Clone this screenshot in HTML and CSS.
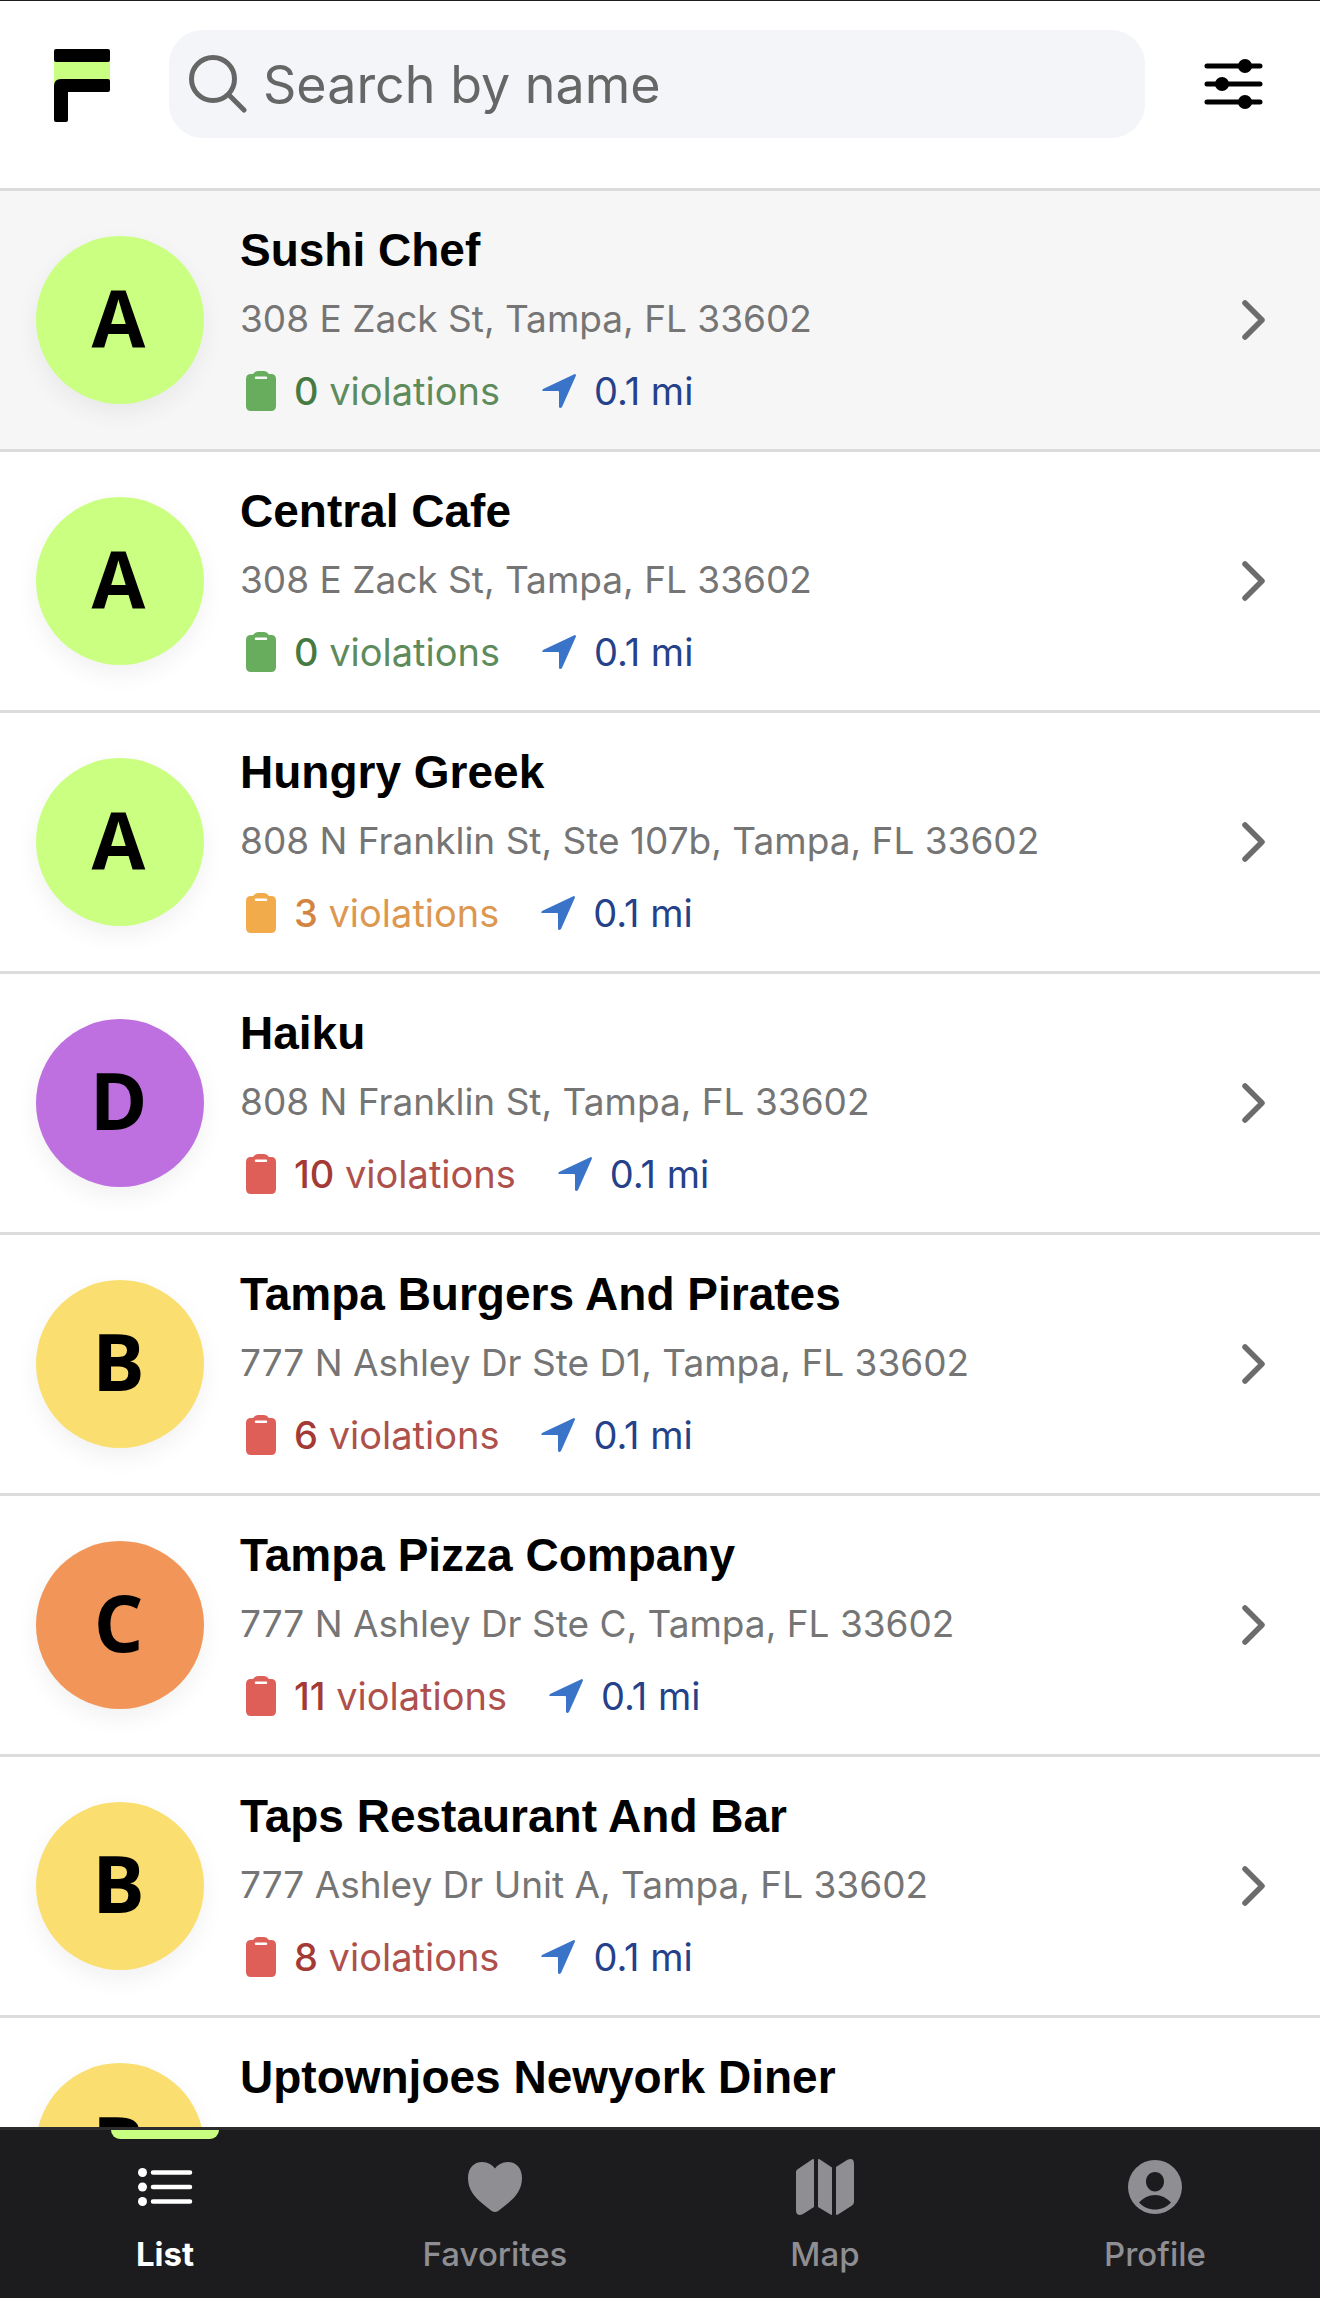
FILE: index.html
```html
<!DOCTYPE html>
<html lang="en">
<head>
  <meta charset="UTF-8">
  <meta name="viewport" content="width=device-width, initial-scale=1.0">
  <title>Restaurant Inspections</title>
  <link rel="stylesheet" href="styles.css">
</head>
<body>
  <!-- shared icons -->
  <svg class="sprite" aria-hidden="true">
    <symbol id="icon-clipboard" viewBox="0 0 30 40">
      <path fill="currentColor" fill-rule="evenodd" d="M5 3H7Q9 0 12 0H18Q21 0 23 3H25Q30 3 30 8V35Q30 40 25 40H5Q0 40 0 35V8Q0 3 5 3ZM10 5.5A1.2 1.2 0 0 0 10 8H20A1.2 1.2 0 0 0 20 5.5Z"/>
    </symbol>
    <symbol id="icon-navigate" viewBox="0 0 34 34">
      <path fill="currentColor" d="M32.3 .2 1 15Q-.4 17 1 17H16Q17 17 17 18V33Q18 35 20 33L34 1.6Q34-.3 32.3 .2Z"/>
    </symbol>
    <symbol id="icon-chevron" viewBox="0 0 24 40">
      <path fill="none" stroke="currentColor" stroke-width="5.5" stroke-linecap="round" stroke-linejoin="round" d="M3 3 20 20 3 37"/>
    </symbol>
  </svg>

  <header class="header">
    <a class="logo" href="#" aria-label="Home">
      <svg width="56" height="74" viewBox="0 0 56 74">
        <path fill="#c9ff80" d="M0 10H56V40H0Z"/>
        <rect width="56" height="13" rx="2"/>
        <path d="M7 30H54Q56 30 56 32V41Q56 43 54 43H14V71Q14 73 12 73H2Q0 73 0 71V37Q0 30 7 30Z"/>
      </svg>
    </a>
    <form class="search">
      <svg width="58" height="58" viewBox="0 0 58 58" fill="none" stroke="#666" stroke-linecap="round">
        <circle cx="24" cy="24" r="21.5" stroke-width="5"/>
        <path d="M40 40 55 55" stroke-width="5"/>
      </svg>
      <input type="search" placeholder="Search by name" aria-label="Search by name">
    </form>
    <button class="filter" type="button" aria-label="Filters">
      <svg width="60" height="50" viewBox="0 0 60 50">
        <path stroke="#000" stroke-width="5" stroke-linecap="round" d="M3 7H56M3 25H56M3 43H56"/>
        <circle cx="41" cy="7" r="7"/>
        <circle cx="18" cy="25" r="7"/>
        <circle cx="41" cy="43" r="7"/>
      </svg>
    </button>
  </header>

  <main class="list" id="list"></main>

  <nav class="tabs">
    <a class="tab active" href="#">
      <svg width="60" height="60" viewBox="0 0 60 60" fill="currentColor">
        <circle cx="7.5" cy="15.5" r="4.5"/>
        <circle cx="7.5" cy="30" r="4.5"/>
        <circle cx="7.5" cy="44.5" r="4.5"/>
        <path stroke="currentColor" stroke-width="4.5" stroke-linecap="round" d="M18 15.5H55M18 30H55M18 44.5H55"/>
      </svg>
      <span>List</span>
    </a>
    <a class="tab" href="#">
      <svg width="60" height="60" viewBox="0 0 60 60" fill="currentColor">
        <path d="M30 55C27 55 24 51.5 18 47C9 40 3 32 3 21C3 11 9 5 17 5C23 5 27.5 8 30 11.5C32.5 8 37 5 43 5C51 5 57 11 57 21C57 32 51 40 42 47C36 51.5 33 55 30 55Z"/>
      </svg>
      <span>Favorites</span>
    </a>
    <a class="tab" href="#">
      <svg width="60" height="60" viewBox="0 0 60 60" fill="currentColor">
        <path d="M1 15Q1 13 3 12L17 2.5Q19 1.5 19 3V50L8 57Q1 60 1 53Z"/>
        <path d="M23 2.5Q23 1.5 25 2.5L37 10.5V57Q37 58.5 35.5 57.5L23 50Z"/>
        <path d="M41 10 52 3Q59 0 59 7V45Q59 47 57 48.5L43 57.5Q41 58.5 41 57Z"/>
      </svg>
      <span>Map</span>
    </a>
    <a class="tab" href="#">
      <svg width="60" height="60" viewBox="0 0 60 60" fill="currentColor">
        <path fill-rule="evenodd" d="M30 3A27 27 0 1 1 30 57A27 27 0 1 1 30 3ZM30 15C25 15 21 19 21 24.5C21 30 25 34.5 30 34.5C35 34.5 39 30 39 24.5C39 19 35 15 30 15ZM14 45.5C18 50 24 52.5 30 52.5S42 50 46 45.5C42 41 36 38 30 38S18 41 14 45.5Z"/>
      </svg>
      <span>Profile</span>
    </a>
  </nav>

  <script>
    const restaurants = [
      { name: 'Sushi Chef', address: '308 E Zack St, Tampa, FL 33602', grade: 'A', violations: 0, level: 'low', pressed: true },
      { name: 'Central Cafe', address: '308 E Zack St, Tampa, FL 33602', grade: 'A', violations: 0, level: 'low' },
      { name: 'Hungry Greek', address: '808 N Franklin St, Ste 107b, Tampa, FL 33602', grade: 'A', violations: 3, level: 'medium' },
      { name: 'Haiku', address: '808 N Franklin St, Tampa, FL 33602', grade: 'D', violations: 10, level: 'high' },
      { name: 'Tampa Burgers And Pirates', address: '777 N Ashley Dr Ste D1, Tampa, FL 33602', grade: 'B', violations: 6, level: 'high' },
      { name: 'Tampa Pizza Company', address: '777 N Ashley Dr Ste C, Tampa, FL 33602', grade: 'C', violations: 11, level: 'high' },
      { name: 'Taps Restaurant And Bar', address: '777 Ashley Dr Unit A, Tampa, FL 33602', grade: 'B', violations: 8, level: 'high' },
      { name: 'Uptownjoes Newyork Diner', grade: 'B' }
    ];

    let output = '';
    restaurants.forEach(r => {
      output += `<a class="row${r.pressed ? ' pressed' : ''}" href="#">
        <div class="grade grade-${r.grade.toLowerCase()}">${r.grade}</div>
        <div class="info">
          <h2>${r.name}</h2>`;
      if (r.address) {
        output += `<p class="address">${r.address}</p>
          <div class="meta">
            <span class="violations ${r.level}">
              <svg width="30" height="40"><use href="#icon-clipboard"/></svg>
              <span><b>${r.violations}</b> violations</span>
            </span>
            <span class="distance">
              <svg width="34" height="34"><use href="#icon-navigate"/></svg>
              0.1 mi
            </span>
          </div>`;
      }
      output += `</div>
        <svg class="chevron" width="24" height="40"><use href="#icon-chevron"/></svg>
      </a>`;
    });
    document.getElementById('list').innerHTML = output;
  </script>
</body>
</html>
```
FILE: styles.css
```css
* {
  box-sizing: border-box;
}

body {
  font-family: Inter, 'Open Sans', sans-serif;
  font-size: 37px;
  color: #000;
  background-color: #fff;
  margin: 0;
  height: 100vh;
  display: flex;
  flex-direction: column;
}

a {
  color: inherit;
  text-decoration: none;
}

svg {
  display: block;
  flex: none;
}

.sprite {
  position: absolute;
  width: 0;
  height: 0;
}

/* header */
.header {
  display: flex;
  align-items: center;
  padding: 29px 56px 50px 54px;
  border-top: 1px solid #1c1c1e;
  border-bottom: 3px solid #dcdcdc;
}

.logo {
  padding-top: 4px;
}

.search {
  flex: 1;
  display: flex;
  align-items: center;
  gap: 16px;
  height: 108px;
  margin: 0 59px;
  padding: 0 20px;
  background-color: #f3f5f9;
  border-radius: 34px;
}

.search input {
  flex: 1;
  min-width: 0;
  padding: 0;
  border: none;
  outline: none;
  background: none;
  font-family: inherit;
  font-size: 52px;
}

.search input::placeholder {
  color: #666;
  opacity: 1;
}

.filter {
  padding: 0;
  border: none;
  background: none;
}

/* restaurant list */
.list {
  flex: 1;
  min-height: 0;
  overflow: hidden;
}

.row {
  display: flex;
  align-items: flex-start;
  gap: 36px;
  height: 261px;
  padding: 29px 54px 0 36px;
  border-bottom: 3px solid #dcdcdc;
}

.pressed {
  background-color: #f6f6f6;
}

.grade {
  flex: none;
  width: 168px;
  height: 168px;
  margin-top: 16px;
  padding-right: 3px;
  border-radius: 50%;
  box-shadow: 0 9px 24px rgba(0, 0, 0, 0.06);
  font-family: 'Open Sans', sans-serif;
  font-size: 78px;
  font-weight: 700;
  line-height: 162px;
  text-align: center;
}

.grade-a {
  background-color: #cbff82;
}

.grade-b {
  background-color: #fadf70;
}

.grade-c {
  background-color: #f19559;
}

.grade-d {
  background-color: #bf70e0;
}

.info {
  flex: 1;
  min-width: 0;
}

.info h2 {
  margin: 0;
  font-family: 'Liberation Sans', Arial, sans-serif;
  font-size: 46px;
  font-weight: bold;
  line-height: 60px;
}

.address {
  margin: 6px 0 0;
  color: #757575;
  line-height: 66px;
}

.meta {
  display: flex;
  align-items: center;
  gap: 42px;
  margin-top: 6px;
  font-size: 38px;
  line-height: 66px;
}

.violations,
.distance {
  display: flex;
  align-items: center;
  gap: 18px;
}

.violations {
  padding-left: 6px;
}

.violations b {
  font-weight: 500;
}

.low {
  color: #5e8b5c;
}

.low b {
  color: #467a42;
}

.low svg {
  color: #68ad5e;
}

.medium {
  color: #dc9850;
}

.medium b {
  color: #d38440;
}

.medium svg {
  color: #f2ab4b;
}

.high {
  color: #ae504b;
}

.high b {
  color: #a33a36;
}

.high svg {
  color: #de5e58;
}

.distance {
  color: #24418a;
}

.distance svg {
  color: #3a74c8;
}

.chevron {
  align-self: center;
  margin-bottom: 29px;
  color: #6c6c6c;
}

/* bottom tabs */
.tabs {
  display: flex;
  background-color: #1c1c1e;
  border-top: 3px solid #2c2c2e;
}

.tab {
  position: relative;
  flex: 1;
  display: flex;
  flex-direction: column;
  align-items: center;
  gap: 16px;
  padding: 27px 0 23px;
  color: #8e8e93;
  font-size: 33px;
  font-weight: 500;
  line-height: 42px;
}

.active {
  color: #fff;
  font-weight: 700;
}

.active::before {
  content: '';
  position: absolute;
  top: 0;
  left: 50%;
  width: 108px;
  height: 9px;
  margin-left: -54px;
  border-radius: 0 0 9px 9px;
  background-color: #c9ff80;
}
```
